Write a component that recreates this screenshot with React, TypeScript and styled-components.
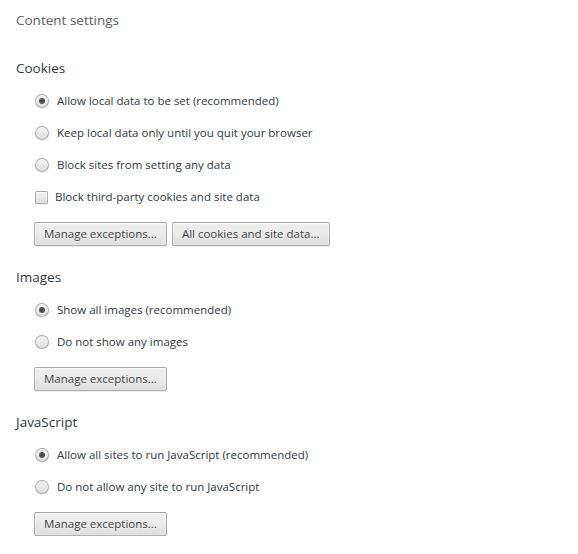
import styled, { createGlobalStyle } from 'styled-components';

const GlobalStyle = createGlobalStyle`
  html, body {
    margin: 0;
    padding: 0;
    background: #ffffff;
  }
  body {
    font-family: "Open Sans", "Noto Sans", "DejaVu Sans", sans-serif;
    color: #303942;
  }
`;

type Option = { label: string; kind: 'radio' | 'checkbox'; checked?: boolean };

type Section = { title: string; options: Option[]; buttons: string[] };

const sections: Section[] = [
  {
    title: 'Cookies',
    options: [
      { label: 'Allow local data to be set (recommended)', kind: 'radio', checked: true },
      { label: 'Keep local data only until you quit your browser', kind: 'radio' },
      { label: 'Block sites from setting any data', kind: 'radio' },
      { label: 'Block third-party cookies and site data', kind: 'checkbox' },
    ],
    buttons: ['Manage exceptions...', 'All cookies and site data...'],
  },
  {
    title: 'Images',
    options: [
      { label: 'Show all images (recommended)', kind: 'radio', checked: true },
      { label: 'Do not show any images', kind: 'radio' },
    ],
    buttons: ['Manage exceptions...'],
  },
  {
    title: 'JavaScript',
    options: [
      { label: 'Allow all sites to run JavaScript (recommended)', kind: 'radio', checked: true },
      { label: 'Do not allow any site to run JavaScript', kind: 'radio' },
    ],
    buttons: ['Manage exceptions...'],
  },
];

function App() {
  return (
    <>
      <GlobalStyle />
      <Page>
        <PageTitle>Content settings</PageTitle>
        {sections.map((section) => (
          <SectionBlock key={section.title}>
            <SectionTitle>{section.title}</SectionTitle>
            <Options>
              {section.options.map((opt) => (
                <OptionRow key={opt.label}>
                  {opt.kind === 'radio' ? (
                    <Radio $checked={!!opt.checked} />
                  ) : (
                    <Checkbox />
                  )}
                  <OptionLabel $kind={opt.kind}>{opt.label}</OptionLabel>
                </OptionRow>
              ))}
              <ButtonRow>
                {section.buttons.map((b) => (
                  <Button key={b}>{b}</Button>
                ))}
              </ButtonRow>
            </Options>
          </SectionBlock>
        ))}
      </Page>
    </>
  );
}

export default App;

const Page = styled.div`
  padding: 10px 16px 0 16px;
`;

const PageTitle = styled.h1`
  margin: 0;
  font-size: 13.5px;
  font-weight: 400;
  line-height: 20px;
  color: #5c6166;
`;

const SectionBlock = styled.section`
  display: flex;
  flex-direction: column;
  margin-top: 28px;

  & + & {
    margin-top: 21px;
  }
`;

const SectionTitle = styled.h3`
  margin: 0;
  font-size: 13.5px;
  font-weight: 400;
  line-height: 20px;
  color: #303942;
`;

const Options = styled.div`
  display: flex;
  flex-direction: column;
  padding-left: 18px;
  margin-top: 7px;
`;

const OptionRow = styled.label`
  display: flex;
  align-items: center;
  height: 32px;
`;

const controlBase = `
  box-sizing: border-box;
  flex: 0 0 auto;
  width: 14px;
  height: 14px;
  margin-left: 1px;
  border: 1px solid rgba(0, 0, 0, 0.25);
  background-image: linear-gradient(#ededed, #ededed 38%, #dedede);
  box-shadow: 0 1px 0 rgba(0, 0, 0, 0.08), inset 0 1px 2px rgba(255, 255, 255, 0.75);
`;

const Radio = styled.span<{ $checked: boolean }>`
  ${controlBase}
  position: relative;
  border-radius: 50%;

  &::after {
    content: '';
    display: ${(p) => (p.$checked ? 'block' : 'none')};
    position: absolute;
    left: 3px;
    top: 3px;
    width: 6px;
    height: 6px;
    border-radius: 50%;
    background: radial-gradient(circle, #444 0, #555 55%, #7a7a7a 100%);
  }
`;

const Checkbox = styled.span`
  ${controlBase}
  width: 13px;
  height: 13px;
  border-radius: 2px;
`;

const OptionLabel = styled.span<{ $kind: 'radio' | 'checkbox' }>`
  margin-left: ${(p) => (p.$kind === 'radio' ? '8px' : '7px')};
  font-size: 11.5px;
  line-height: 16px;
  color: #303942;
  white-space: nowrap;
`;

const ButtonRow = styled.div`
  display: flex;
  gap: 5px;
  margin-top: 9px;
`;

const Button = styled.button`
  box-sizing: border-box;
  height: 24px;
  padding: 0 9px;
  border: 1px solid rgba(0, 0, 0, 0.25);
  border-radius: 2px;
  background-image: linear-gradient(#ededed, #ededed 38%, #dedede);
  box-shadow: 0 1px 0 rgba(0, 0, 0, 0.08), inset 0 1px 2px rgba(255, 255, 255, 0.75);
  color: #444444;
  text-shadow: 0 1px 0 #f0f0f0;
  font-family: "Open Sans", "Noto Sans", "DejaVu Sans", sans-serif;
  font-size: 11.5px;
  line-height: 22px;
  cursor: default;
`;
